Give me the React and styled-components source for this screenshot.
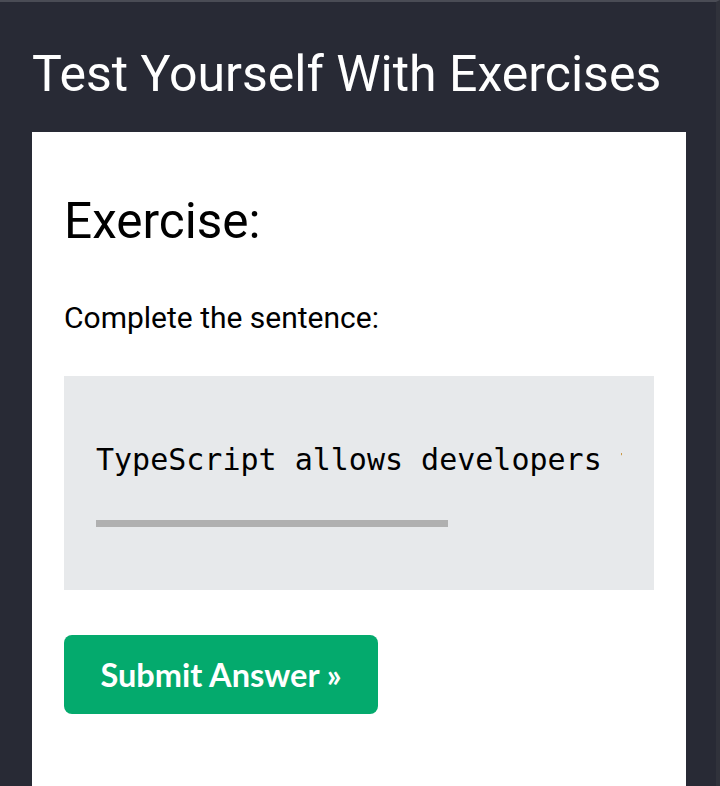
import React from "react";
import styled, { createGlobalStyle } from "styled-components";

const Global = createGlobalStyle`
  html, body { margin: 0; padding: 0; background: #282a35; }
  body { font-family: Roboto, "Liberation Sans", sans-serif; }
`;

const Page = styled.div`
  box-sizing: border-box;
  height: 786px;
  background: #282a35;
  border-top: 2px solid #4a4c55;
  border-right: 4px solid #30323b;
  padding: 0 30px 0 32px;
  overflow: hidden;
`;

const Title = styled.h2`
  margin: 0;
  padding-top: 47px;
  font-family: Roboto, sans-serif;
  font-weight: 400;
  font-size: 50px;
  line-height: 50px;
  color: #ffffff;
  white-space: nowrap;
`;

const Card = styled.section`
  margin-top: 33px;
  background: #ffffff;
  padding: 61px 32px 60px;
  min-height: 700px;
`;

const Heading = styled.h3`
  margin: 0;
  font-family: Roboto, sans-serif;
  font-weight: 400;
  font-size: 49.5px;
  line-height: 56px;
  color: #000;
`;

const Prompt = styled.p`
  margin: 49px 0 0;
  font-size: 30px;
  line-height: 40px;
  color: #000;
`;

const CodeBox = styled.div`
  margin-top: 38px;
  background: #e7e9eb;
  padding: 64px 32px 63px;
`;

const CodeLine = styled.div`
  font-family: "DejaVu Sans Mono", "Liberation Mono", monospace;
  font-size: 30px;
  line-height: 40px;
  color: #000;
  white-space: pre;
  overflow: hidden;
`;

const Blank = styled.div`
  margin-top: 40px;
  width: 352px;
  height: 7px;
  background: #b0b0b0;
`;

const SubmitButton = styled.button`
  margin-top: 45px;
  width: 314px;
  height: 79px;
  border: none;
  border-radius: 8px;
  background: #04aa6d;
  color: #fff;
  font-family: Lato, "Open Sans", sans-serif;
  font-weight: 700;
  font-size: 32.5px;
  cursor: pointer;
  display: flex;
  align-items: center;
  justify-content: center;
  padding: 0;
`;

export default function App() {
  return (
    <>
      <Global />
      <Page>
        <Title>Test Yourself With Exercises</Title>
        <Card>
          <Heading>Exercise:</Heading>
          <Prompt>Complete the sentence:</Prompt>
          <CodeBox>
            <CodeLine>TypeScript allows developers to add types to JavaScript.</CodeLine>
            <Blank />
          </CodeBox>
          <SubmitButton>Submit Answer »</SubmitButton>
        </Card>
      </Page>
    </>
  );
}
